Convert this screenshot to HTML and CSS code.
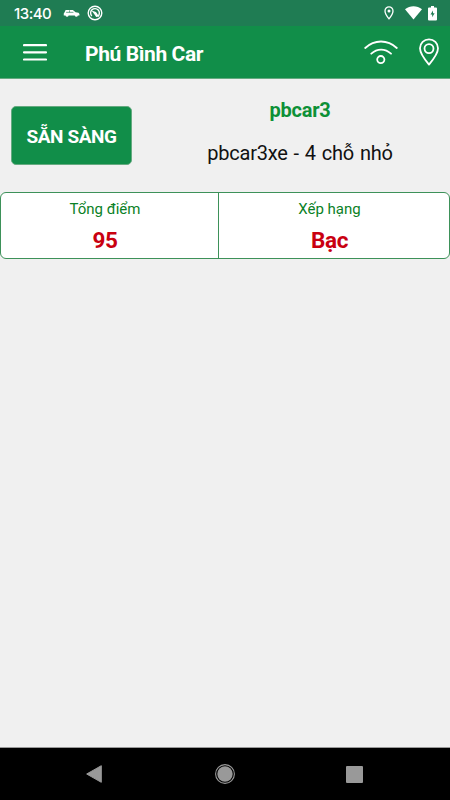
FILE: index.html
```html
<!DOCTYPE html>
<html lang="vi">
<head>
<meta charset="utf-8">
<title>Phú Bình Car</title>
<link rel="stylesheet" href="styles.css">
</head>
<body>
<div class="status">
  <span class="time">13:40</span>
  <svg class="s-car" width="17" height="9" viewBox="0 0 18 10"><path fill="#fff" d="M1 4.200 2.500 1h8l3 2.600 3.300.7 1 1.200v1.600h-1.700a1.800 1.800 0 0 1-3.500 0H5.800a1.800 1.800 0 0 1-3.500 0H.4V5z"/><path stroke="#1f7c53" stroke-width=".7" d="M3 3.700h8.200M6.800 1.500v2.200"/></svg>
  <svg class="s-dial" width="16" height="16" viewBox="0 0 16 16"><circle cx="8" cy="8" r="6.800" fill="none" stroke="#fff" stroke-width="1.400"/><path d="M4.800 11A4.400 4.400 0 1 1 11 11.200" fill="none" stroke="#fff" stroke-width="1.400"/><path d="M4.500 5.500 9 7l3 4.500L9.200 12 7.500 9.500z" fill="#fff"/></svg>
  <span class="grow"></span>
  <svg width="10" height="14" viewBox="0 0 10 14"><path d="M5 .9a4 4 0 0 0-4 4C1 7.800 5 12.800 5 12.800S9 7.800 9 4.900a4 4 0 0 0-4-4z" fill="none" stroke="#fff" stroke-width="1.300"/><circle cx="5" cy="4.900" r="1.500" fill="#fff"/></svg>
  <svg class="s-wifi" width="17" height="14" viewBox="0 0 17 14"><path fill="#fff" d="M0 3.300C5-.8 12-.8 17 3.300L8.500 13.600z"/></svg>
  <svg class="s-batt" width="9" height="15" viewBox="0 0 9 15"><path fill="#fff" d="M3 0h3v1.400h2q1 0 1 1V13.500q0 1-1 1H1q-1 0-1-1V2.400q0-1 1-1h2z"/><path fill="#1f7c53" d="M5 4.500 2.500 8.500h1.700v2.800l2.400-4H5z"/></svg>
</div>
<header class="bar">
  <svg width="24" height="18" viewBox="0 0 24 18"><path stroke="#fff" stroke-width="2.200" stroke-linecap="round" d="M1 2.200h22M1 9.300h22M1 16.500h22"/></svg>
  <h1>Phú Bình Car</h1>
  <span class="grow"></span>
  <svg class="signal" width="34" height="26" viewBox="0 0 34 26" fill="none" stroke="#fff" stroke-width="1.800" stroke-linecap="round"><path d="M1.200 8C10.500-.7 23.500-.7 32.800 8M7.300 13.700C13 8.300 21.200 8.300 27 13.700"/><circle cx="16.800" cy="19.600" r="3.600"/></svg>
  <svg class="pin" width="20" height="28" viewBox="0 0 20 28" fill="none" stroke="#fff" stroke-width="1.800" stroke-linejoin="round"><path d="M10 1.300a9 9 0 0 0-9 9C1 16 10 26.600 10 26.600S19 16 19 10.300a9 9 0 0 0-9-9z"/><circle cx="10" cy="10.600" r="4.500"/></svg>
</header>
<main>
  <section class="driver">
    <button class="ready">SẴN SÀNG</button>
    <div class="info">
      <div class="name">pbcar3</div>
      <div class="vehicle">pbcar3xe - 4 chỗ nhỏ</div>
    </div>
  </section>
  <section class="stats">
    <div class="cell"><div class="label">Tổng điểm</div><div class="value">95</div></div>
    <div class="cell"><div class="label">Xếp hạng</div><div class="value">Bạc</div></div>
  </section>
</main>
<nav>
  <svg width="16" height="18" viewBox="0 0 16 18"><path fill="#999" stroke="#999" stroke-linejoin="round" d="M.7 9 15.300.7v16.600z"/></svg>
  <svg class="home" width="20" height="20" viewBox="0 0 20 20"><circle cx="10" cy="10" r="9.400" fill="none" stroke="#999" stroke-width="1.100"/><circle cx="10" cy="10" r="7.700" fill="#999"/></svg>
  <svg width="17" height="17" viewBox="0 0 17 17"><rect width="17" height="17" rx="1" fill="#999"/></svg>
</nav>
</body>
</html>
```

FILE: styles.css
```css
* { box-sizing: border-box; }
body {
  margin: 0;
  height: 800px;
  display: flex;
  flex-direction: column;
  background: #f0f0f0;
  font-family: Roboto, sans-serif;
  overflow: hidden;
}
svg { display: block; flex: none; }
.grow { flex: 1; }
.status {
  height: 26px;
  background: #1f7c53;
  display: flex;
  align-items: center;
  padding: 0 13px;
  color: #fff;
}
.time {
  width: 50px;
  font-family: Inter, sans-serif;
  font-size: 15px;
  font-weight: 500;
  line-height: 26px;
  padding: 1px 0 0 1px;
  letter-spacing: -0.5px;
}
.s-dial { margin-left: 7px; }
.s-wifi { margin-left: 11px; }
.s-batt { margin-left: 6px; }
.bar {
  height: 53px;
  background: #118e49;
  border-bottom: 1px solid #65aa80;
  display: flex;
  align-items: center;
  padding: 0 11px 0 23px;
  color: #fff;
}
h1 {
  margin: 3px 0 0 38px;
  font-size: 21px;
  line-height: 26px;
  font-weight: 700;
  letter-spacing: -0.4px;
  white-space: nowrap;
}
.signal { margin-top: 1px; }
.pin { margin-left: 21px; }
main { flex: 1; }
.driver {
  height: 113px;
  display: flex;
  padding-left: 11px;
}
.ready {
  width: 121px;
  height: 59px;
  margin: 27px 0 0;
  padding: 2px 0 0;
  border: 1px solid #65aa80;
  border-radius: 5px;
  background: #118e49;
  color: #fff;
  font: 700 19px/24px Roboto, sans-serif;
  letter-spacing: -0.4px;
}
.info {
  flex: 1;
  margin-left: 18px;
  padding: 19px 0 0;
  text-align: center;
}
.name {
  font-size: 20px;
  line-height: 24px;
  font-weight: 700;
  letter-spacing: -0.2px;
  color: #0d9037;
}
.vehicle {
  margin-top: 19px;
  font-size: 20px;
  line-height: 24px;
  letter-spacing: -0.25px;
  word-spacing: 1.3px;
  color: #111;
}
.stats {
  height: 67px;
  display: flex;
  background: #fff;
  border: 1px solid #3d9159;
  border-radius: 6px;
}
.cell {
  flex: none;
  text-align: center;
  padding: 6px 9px 0 0;
  width: 217px;
}
.cell + .cell {
  flex: 1;
  border-left: 1px solid #3d9159;
}
.label {
  font-size: 15px;
  line-height: 20px;
  color: #0a8126;
}
.value {
  margin-top: 8px;
  font-size: 22.5px;
  line-height: 26px;
  font-weight: 700;
  letter-spacing: -0.3px;
  color: #c90010;
}
nav {
  height: 53px;
  background: #000;
  border-top: 1px solid #999;
  display: flex;
  justify-content: space-between;
  align-items: center;
  padding: 0 87px 0 86px;
}
.home { margin-left: 2px; }
```
